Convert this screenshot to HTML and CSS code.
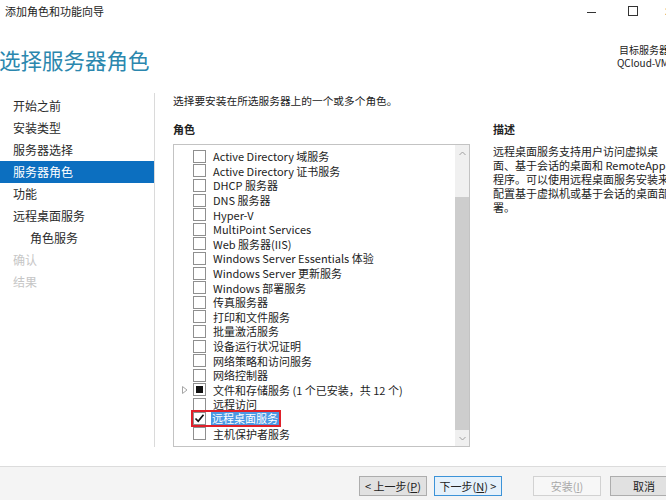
FILE: index.html
```html
<!DOCTYPE html>
<html lang="zh-CN">
<head>
<meta charset="utf-8">
<title>添加角色和功能向导</title>
<link rel="stylesheet" href="styles.css">
</head>
<body>
<div class="window">
  <div class="titlebar">
    <span class="title">添加角色和功能向导</span>
    <div class="controls">
      <span class="ctl-min"></span>
      <span class="ctl-max"></span>
      <span class="ctl-close">✕</span>
    </div>
  </div>

  <header class="header">
    <h1 class="heading">选择服务器角色</h1>
    <div class="target">
      <div>目标服务器</div>
      <div>QCloud-VM</div>
    </div>
  </header>

  <div class="main">
    <nav class="nav">
      <div class="nav-item">开始之前</div>
      <div class="nav-item">安装类型</div>
      <div class="nav-item">服务器选择</div>
      <div class="nav-item active">服务器角色</div>
      <div class="nav-item">功能</div>
      <div class="nav-item">远程桌面服务</div>
      <div class="nav-item sub">角色服务</div>
      <div class="nav-item disabled">确认</div>
      <div class="nav-item disabled">结果</div>
    </nav>

    <section class="content">
      <p class="intro">选择要安装在所选服务器上的一个或多个角色。</p>
      <div class="cols">
        <div class="roles">
          <h2 class="label">角色</h2>
          <div class="listbox">
            <ul class="items">
              <li class="item"><span class="exp"></span><span class="cb"></span><span class="txt">Active Directory 域服务</span></li>
              <li class="item"><span class="exp"></span><span class="cb"></span><span class="txt">Active Directory 证书服务</span></li>
              <li class="item"><span class="exp"></span><span class="cb"></span><span class="txt">DHCP 服务器</span></li>
              <li class="item"><span class="exp"></span><span class="cb"></span><span class="txt">DNS 服务器</span></li>
              <li class="item"><span class="exp"></span><span class="cb"></span><span class="txt">Hyper-V</span></li>
              <li class="item"><span class="exp"></span><span class="cb"></span><span class="txt">MultiPoint Services</span></li>
              <li class="item"><span class="exp"></span><span class="cb"></span><span class="txt">Web 服务器(IIS)</span></li>
              <li class="item"><span class="exp"></span><span class="cb"></span><span class="txt">Windows Server Essentials 体验</span></li>
              <li class="item"><span class="exp"></span><span class="cb"></span><span class="txt">Windows Server 更新服务</span></li>
              <li class="item"><span class="exp"></span><span class="cb"></span><span class="txt">Windows 部署服务</span></li>
              <li class="item"><span class="exp"></span><span class="cb"></span><span class="txt">传真服务器</span></li>
              <li class="item"><span class="exp"></span><span class="cb"></span><span class="txt">打印和文件服务</span></li>
              <li class="item"><span class="exp"></span><span class="cb"></span><span class="txt">批量激活服务</span></li>
              <li class="item"><span class="exp"></span><span class="cb"></span><span class="txt">设备运行状况证明</span></li>
              <li class="item"><span class="exp"></span><span class="cb"></span><span class="txt">网络策略和访问服务</span></li>
              <li class="item"><span class="exp"></span><span class="cb"></span><span class="txt">网络控制器</span></li>
              <li class="item"><span class="exp"><svg width="6" height="8" viewBox="0 0 6 8"><polygon points="0.5,0.5 5,4 0.5,7.5" fill="none" stroke="#a6a6a6" stroke-width="1"/></svg></span><span class="cb"><span class="partial"></span></span><span class="txt">文件和存储服务 (1 个已安装，共 12 个)</span></li>
              <li class="item"><span class="exp"></span><span class="cb"></span><span class="txt">远程访问</span></li>
              <li class="item"><span class="exp"></span><span class="mark"><span class="cb"><svg width="11" height="11" viewBox="0 0 11 11"><polyline points="1.5,5.5 4.2,8.3 9.5,1.8" fill="none" stroke="#111" stroke-width="1.7"/></svg></span><span class="txt selected">远程桌面服务</span></span></li>
              <li class="item"><span class="exp"></span><span class="cb"></span><span class="txt">主机保护者服务</span></li>
            </ul>
            <div class="scrollbar">
              <div class="sb-btn up"><svg width="7" height="5" viewBox="0 0 7 5"><polyline points="0.5,4 3.5,1 6.5,4" fill="none" stroke="#a0a0a0" stroke-width="1"/></svg></div>
              <div class="sb-gap"></div>
              <div class="sb-thumb"></div>
              <div class="sb-btn down"><svg width="7" height="5" viewBox="0 0 7 5"><polyline points="0.5,1 3.5,4 6.5,1" fill="none" stroke="#a0a0a0" stroke-width="1"/></svg></div>
            </div>
          </div>
        </div>
        <div class="desc">
          <h2 class="label">描述</h2>
          <p class="desc-text">远程桌面服务支持用户访问虚拟桌<br>面、基于会话的桌面和 RemoteApp<br>程序。可以使用远程桌面服务安装来<br>配置基于虚拟机或基于会话的桌面部<br>署。</p>
        </div>
      </div>
    </section>
  </div>

  <footer class="footer">
    <button class="btn prev">&lt; 上一步(<u>P</u>)</button>
    <button class="btn next">下一步(<u>N</u>) &gt;</button>
    <button class="btn install">安装(<u>I</u>)</button>
    <button class="btn cancel">取消</button>
  </footer>
</div>
</body>
</html>
```

FILE: styles.css
```css
html, body {
  margin: 0;
  padding: 0;
}
body {
  width: 666px;
  height: 500px;
  overflow: hidden;
  background: #fff;
  color: #222;
  font-family: "Noto Sans CJK SC", "Noto Sans", sans-serif;
}
.window {
  display: flex;
  flex-direction: column;
  height: 500px;
}

/* title bar */
.titlebar {
  height: 22px;
  display: flex;
  align-items: center;
  padding-left: 5px;
  font-size: 11px;
  color: #222;
}
.controls {
  margin-left: auto;
  display: flex;
  align-items: center;
  margin-right: -10px;
}
.ctl-min {
  width: 9px;
  height: 1px;
  background: #333;
  margin-right: 32px;
  margin-top: 2px;
}
.ctl-max {
  width: 8px;
  height: 8px;
  border: 1px solid #333;
  margin-right: 26px;
}
.ctl-close {
  font-size: 12px;
  line-height: 12px;
  width: 12px;
}

/* header */
.header {
  height: 71px;
  display: flex;
  justify-content: space-between;
  align-items: flex-start;
}
.heading {
  margin: 23px 0 0 -1px;
  font-size: 21.5px;
  line-height: 30px;
  font-weight: normal;
  color: #2b87ae;
  white-space: nowrap;
}
.target {
  margin-top: 21px;
  margin-right: -3px;
  text-align: right;
  font-size: 10px;
  line-height: 13px;
  color: #222;
  white-space: nowrap;
}

/* main */
.main {
  height: 354px;
  display: flex;
}
.nav {
  width: 154px;
  border-right: 1px solid #dadada;
  padding-top: 2px;
  font-size: 12px;
}
.nav-item {
  line-height: 22px;
  height: 22px;
  padding-left: 13px;
  color: #2a2a2a;
  white-space: nowrap;
}
.nav-item.active {
  background: #0c6fc0;
  color: #fff;
}
.nav-item.sub {
  padding-left: 30px;
}
.nav-item.disabled {
  color: #c6c6c6;
}

.content {
  flex: 1;
  padding: 1px 0 0 18px;
  min-width: 0;
}
.intro {
  margin: 0;
  font-size: 10.7px;
  line-height: 14px;
  white-space: nowrap;
}
.cols {
  display: grid;
  grid-template-columns: 297px auto;
  column-gap: 23px;
  margin-top: 14px;
}
.label {
  margin: 0;
  font-size: 11px;
  line-height: 14px;
  font-weight: bold;
}

.listbox {
  margin-top: 8px;
  height: 303px;
  box-sizing: border-box;
  border: 1px solid #c3c3c3;
  display: flex;
}
.items {
  flex: 1;
  list-style: none;
  margin: 0;
  padding: 4px 0 0 8px;
  font-size: 11px;
}
.item {
  display: flex;
  align-items: center;
  height: 14.6px;
  white-space: nowrap;
}
.exp {
  width: 11px;
  display: flex;
  align-items: center;
}
.cb {
  width: 11px;
  height: 11px;
  border: 1px solid #8f8f8f;
  background: #fff;
  margin-right: 7px;
  display: flex;
  align-items: center;
  justify-content: center;
  flex: none;
}
.partial {
  width: 7px;
  height: 7px;
  background: #111;
}
.txt {
  line-height: 14px;
}
.mark {
  display: flex;
  align-items: center;
  outline: 2px solid #e0202a;
  outline-offset: 0;
  height: 13px;
}
.txt.selected {
  background: #4a98e4;
  color: #fff;
  line-height: 13px;
  margin-left: -2px;
  padding: 0 1px;
}

.scrollbar {
  width: 14px;
  background: #f0f0f0;
  display: flex;
  flex-direction: column;
}
.sb-btn {
  display: flex;
  align-items: center;
  justify-content: center;
}
.sb-btn.up {
  height: 17px;
}
.sb-btn.down {
  height: 16px;
}
.sb-gap {
  height: 35px;
}
.sb-thumb {
  flex: 1;
  background: #cdcdcd;
}

.desc-text {
  margin: 8px 0 0;
  font-size: 11px;
  line-height: 14px;
  white-space: nowrap;
}

/* footer */
.footer {
  margin-top: auto;
  height: 34px;
  box-sizing: border-box;
  border-top: 1px solid #dcdcdc;
  background: #f4f4f4;
  display: flex;
  align-items: flex-start;
  padding: 9px 0 0 359px;
}
.btn {
  width: 68px;
  height: 20px;
  flex: none;
  box-sizing: border-box;
  padding: 0;
  margin: 0;
  border: 1px solid #adadad;
  background: #e1e1e1;
  font-family: "Noto Sans CJK SC", "Noto Sans", sans-serif;
  font-size: 11px;
  line-height: 18px;
  color: #222;
  text-align: center;
}
.btn u {
  text-decoration-thickness: 1px;
}
.prev {
  margin-right: 7px;
}
.next {
  margin-right: 31px;
  border-color: #3c93d8;
  background: #e5f1fb;
}
.install {
  margin-right: 9px;
  background: #f7f7f7;
  border-color: #d2d2d2;
  color: #a8a8a8;
}
```
